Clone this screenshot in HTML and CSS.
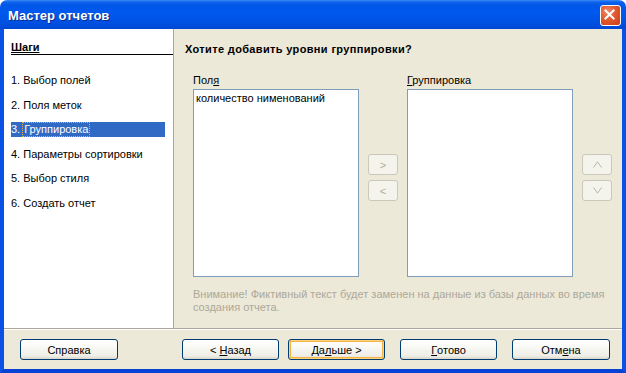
FILE: index.html
```html
<!DOCTYPE html>
<html lang="ru">
<head>
<meta charset="utf-8">
<title>Мастер отчетов</title>
<link rel="stylesheet" href="styles.css">
</head>
<body>
<div class="window">
  <div class="titlebar">
    <span class="title">Мастер отчетов</span>
    <span class="close">
      <svg width="21" height="21" viewBox="0 0 21 21"><path d="M6 6 L15 15 M15 6 L6 15" stroke="#fff" stroke-width="2.2" stroke-linecap="square"/></svg>
    </span>
  </div>
  <div class="frame">
    <div class="main">
      <aside class="steps">
        <div class="steps-head">Шаги</div>
        <ul class="step-list">
          <li class="step">1. Выбор полей</li>
          <li class="step">2. Поля меток</li>
          <li class="step selected">3. <span class="focus">Группировка</span></li>
          <li class="step">4. Параметры сортировки</li>
          <li class="step">5. Выбор стиля</li>
          <li class="step">6. Создать отчет</li>
        </ul>
      </aside>
      <section class="content">
        <h1 class="heading">Хотите добавить уровни группировки?</h1>
        <div class="grid">
          <div class="label l1">Пол<u>я</u></div>
          <div class="label l2"><u>Г</u>руппировка</div>
          <div class="list list1"><div class="item">количество нименований</div></div>
          <div class="movebtns mb1">
            <span class="sbtn">&gt;</span>
            <span class="sbtn">&lt;</span>
          </div>
          <div class="list list2"></div>
          <div class="movebtns mb2">
            <span class="sbtn"><svg width="9" height="7" viewBox="0 0 9 7"><polyline points="0.5,6.5 4.5,0.8 8.5,6.5" fill="none" stroke="#B8B6A8" stroke-width="1"/></svg></span>
            <span class="sbtn"><svg width="9" height="7" viewBox="0 0 9 7"><polyline points="0.5,0.5 4.5,6.2 8.5,0.5" fill="none" stroke="#B8B6A8" stroke-width="1"/></svg></span>
          </div>
        </div>
        <p class="note">Внимание! Фиктивный текст будет заменен на данные из базы данных во время создания отчета.</p>
      </section>
    </div>
    <div class="separator"></div>
    <div class="footer">
      <span class="btn">Справка</span>
      <span class="btn back">&lt;&nbsp;<u>Н</u>азад</span>
      <span class="btn default">Да<u>л</u>ьше &gt;</span>
      <span class="btn done"><u>Г</u>отово</span>
      <span class="btn">Отм<u>е</u>на</span>
    </div>
  </div>
</div>
</body>
</html>
```

FILE: styles.css
```css
html, body {
  margin: 0;
  padding: 0;
  background: #ffffff;
}
body {
  font-family: "Liberation Sans", Arial, sans-serif;
  font-size: 11px;
  color: #000;
}
.window {
  width: 626px;
  height: 373px;
  display: flex;
  flex-direction: column;
}
.titlebar {
  height: 29px;
  flex: none;
  border-radius: 7px 7px 0 0;
  background: linear-gradient(to bottom, #3C8CF7 0, #0F62EB 2px, #0057E7 5px, #0059EE 12px, #0053E6 20px, #004CDB 26px, #0047D2 29px);
  display: flex;
  align-items: center;
  padding: 0 5px 0 8px;
  box-sizing: border-box;
}
.title {
  flex: 1;
  color: #fff;
  font-weight: bold;
  font-size: 13px;
  text-shadow: 1px 1px 0 #0A2A8A;
  padding-top: 1px;
}
.close {
  width: 21px;
  height: 21px;
  box-sizing: border-box;
  border: 1px solid #fff;
  border-radius: 3px;
  background: radial-gradient(circle at 35% 30%, #F08A68 0, #E2582F 45%, #C93E16 100%);
  display: flex;
  align-items: center;
  justify-content: center;
  margin-top: 1px;
}
.close svg { display: block; position: relative; left: -1px; top: -1px; }
.frame {
  flex: 1;
  display: flex;
  flex-direction: column;
  background: #ECE9D8;
  border-left: 4px solid #0A52E6;
  border-right: 4px solid #0A52E6;
  border-bottom: 4px solid #0842D4;
}
.main {
  height: 299px;
  flex: none;
  display: flex;
}
.steps {
  width: 169px;
  flex: none;
  background: #fff;
  border-right: 1px solid #ACA899;
  padding-top: 12px;
}
.steps-head {
  margin-left: 7px;
  font-weight: bold;
  line-height: 13px;
  border-bottom: 1px solid #000;
  text-decoration: underline;
}
.step-list {
  list-style: none;
  margin: 18px 0 0 7px;
  padding: 0;
  display: flex;
  flex-direction: column;
  gap: 9.5px;
}
.step {
  height: 15px;
  line-height: 15px;
  width: 154px;
  white-space: nowrap;
}
.step.selected {
  background: #316AC5;
  color: #fff;
}
.focus {
  outline: 1px dotted #F0B040;
  outline-offset: 0;
  padding: 0 1px;
  display: inline-block;
  line-height: 13px;
}
.content {
  flex: 1;
  padding: 14px 0 0 11px;
}
.heading {
  margin: 0;
  font-size: 11px;
  font-weight: bold;
  line-height: 13px;
  letter-spacing: 0.35px;
}
.grid {
  margin: 18px 0 0 8px;
  display: grid;
  grid-template-columns: 166px 30px 166px 30px;
  column-gap: 9px;
  grid-template-rows: 13px 188px;
  row-gap: 2px;
}
.label { line-height: 13px; }
.l1 { grid-column: 1; grid-row: 1; }
.l2 { grid-column: 3; grid-row: 1; }
.list {
  grid-row: 2;
  background: #fff;
  border: 1px solid #7F9DB9;
}
.list1 { grid-column: 1; }
.list2 { grid-column: 3; }
.item {
  padding: 2px 2px 0;
  line-height: 13px;
}
.movebtns {
  grid-row: 2;
  align-self: center;
  display: flex;
  flex-direction: column;
  gap: 5px;
  margin-top: -11px;
}
.mb1 { grid-column: 2; }
.mb2 { grid-column: 4; }
.sbtn {
  height: 21px;
  box-sizing: border-box;
  border: 1px solid #CAC8BB;
  border-radius: 3px;
  background: #F4F3EC;
  color: #B0AE9F;
  display: flex;
  align-items: center;
  justify-content: center;
  font-size: 11px;
}
.note {
  margin: 11px 0 0 8px;
  color: #ACA899;
  line-height: 13px;
  width: 420px;
}
.separator {
  height: 1px;
  border-top: 1px solid #ACA899;
  background: #fff;
  flex: none;
}
.footer {
  flex: 1;
  display: flex;
  align-items: flex-start;
  padding: 9px 0 0 16px;
}
.btn {
  width: 98px;
  height: 21px;
  box-sizing: border-box;
  border: 1px solid #003C74;
  border-radius: 3px;
  background: linear-gradient(to bottom, #FFFFFF 0, #F8F8F4 40%, #EEEDE6 85%, #D8D5C8 100%);
  display: flex;
  align-items: center;
  justify-content: center;
  margin-right: 64px;
}
.back { width: 97px; margin-right: 9px; }
.default {
  width: 97px;
  margin-right: 15px;
  box-shadow: inset 0 0 0 1px #FFD27A, inset 0 0 0 2px #F5B443;
}
.done { width: 97px; margin-right: 15px; }
.btn:last-child { margin-right: 0; }
```
